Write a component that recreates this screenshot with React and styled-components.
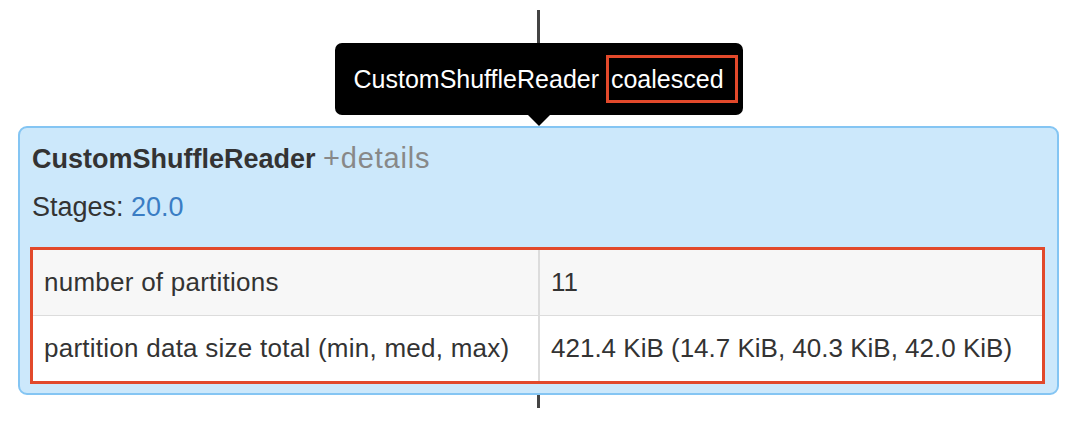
import { Fragment } from "react"
import styled, { createGlobalStyle } from "styled-components"

const GlobalStyle = createGlobalStyle`
  body {
    margin: 0;
    background: #fff;
    font-family: "Liberation Sans", Arial, sans-serif;
  }
`

const Page = styled.div`
  width: 1041px;
  height: 448px;
  margin-left: 18px;
  display: flex;
  flex-direction: column;
  align-items: center;
`

const Edge = styled.div`
  width: 3px;
  height: ${(p) => p.h}px;
  margin-top: ${(p) => p.top || 0}px;
  background: #444;
  flex-shrink: 0;
`

const Tooltip = styled.div`
  position: relative;
  box-sizing: border-box;
  width: 408px;
  height: 72px;
  padding-left: 19px;
  margin-bottom: 11px;
  background: #000;
  border-radius: 7px;
  display: flex;
  align-items: center;
  color: #fff;
  font-size: 25px;
  white-space: pre;

  &::after {
    content: "";
    position: absolute;
    left: 50%;
    bottom: -11px;
    margin-left: -11px;
    border-left: 11px solid transparent;
    border-right: 11px solid transparent;
    border-top: 11px solid #000;
  }
`

const Highlight = styled.span`
  display: inline-block;
  border: 3px solid #e2492b;
  padding: 0 11px 0 2px;
  line-height: 42px;
`

const Card = styled.div`
  box-sizing: border-box;
  width: 1041px;
  height: 269px;
  padding: 14px 12px 0 10px;
  background: #cce8fb;
  border: 2px solid #84c5f3;
  border-radius: 9px;
  color: #333;
  align-self: stretch;
`

const Title = styled.div`
  margin-left: 2px;
  height: 32px;
  line-height: 32px;
  font-size: 27px;
  font-weight: bold;
  color: #333;
`

const Details = styled.span`
  font-weight: normal;
  font-size: 29px;
  letter-spacing: 0.8px;
  color: #888;
`

const Stages = styled.div`
  margin: 17px 0 0 2px;
  height: 32px;
  line-height: 32px;
  font-size: 27px;
`

const StageLink = styled.span`
  color: #3a7dc4;
`

const Table = styled.div`
  margin-top: 24px;
  border: 3px solid #e2492b;
  display: grid;
  grid-template-columns: 505px 1fr;
  font-size: 26px;
  color: #333;
`

const Cell = styled.div`
  height: 65px;
  display: flex;
  align-items: center;
  padding-left: 11px;
  background: ${(p) => (p.shaded ? "#f7f7f7" : "#fff")};
  border-bottom: ${(p) => (p.last ? "none" : "1px solid #dcdcdc")};
  border-left: ${(p) => (p.right ? "2px solid #dcdcdc" : "none")};
  white-space: nowrap;
  letter-spacing: ${(p) => (p.right ? "0" : "0.25px")};
`

const rows = [
  ["number of partitions", "11"],
  ["partition data size total (min, med, max)", "421.4 KiB (14.7 KiB, 40.3 KiB, 42.0 KiB)"],
]

const App = () => {
  return (
    <>
      <GlobalStyle />
      <Page>
        <Edge h={33} top={10} />
        <Tooltip>
          CustomShuffleReader <Highlight>coalesced</Highlight>
        </Tooltip>
        <Card>
          <Title>
            CustomShuffleReader <Details>+details</Details>
          </Title>
          <Stages>
            Stages: <StageLink>20.0</StageLink>
          </Stages>
          <Table>
            {rows.map(([name, value], i) => (
              <Fragment key={name}>
                <Cell shaded={i % 2 === 0} last={i === rows.length - 1}>
                  {name}
                </Cell>
                <Cell right shaded={i % 2 === 0} last={i === rows.length - 1}>
                  {value}
                </Cell>
              </Fragment>
            ))}
          </Table>
        </Card>
        <Edge h={13} />
      </Page>
    </>
  )
}

export default App
